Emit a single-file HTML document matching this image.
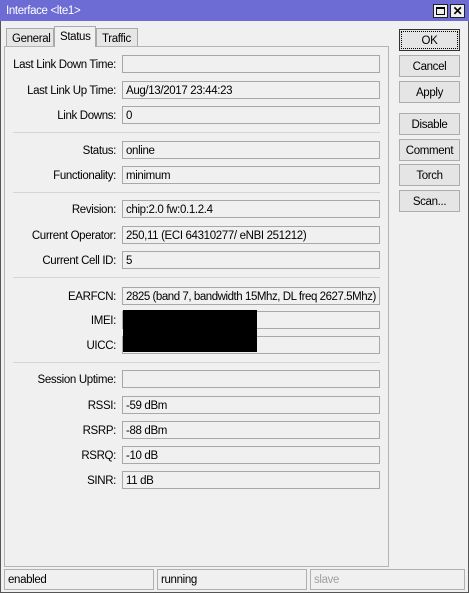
<!DOCTYPE html>
<html><head><style>
*{box-sizing:border-box;margin:0;padding:0}
body{width:469px;height:594px;background:#fff;font-family:"Liberation Sans",sans-serif;font-size:11.5px;letter-spacing:-0.35px;color:#000;position:relative;overflow:hidden}
.win{position:absolute;left:0;top:0;width:469px;height:593px;background:#f0f0f0;border:1px solid #555;border-top:none}
.title{position:absolute;left:0;top:0;width:469px;height:21px;background:#6c6cd4;color:#fff;padding:5px 0 0 6px}
.tb{position:absolute;top:4px;width:15px;height:14px;background:#f0f0f0;border:1px solid #222}
.tab{position:absolute;top:28px;height:19px;border:1px solid #aaa;border-bottom:none;background:#e6e6e6;padding:4px 0 0 5px}
.panel{position:absolute;left:4px;top:46px;width:385px;height:521px;border:1px solid #b4b4b4;background:#f0f0f0}
.lbl{position:absolute;text-align:right;white-space:nowrap;margin-top:1px}
.f{position:absolute;left:122px;width:258px;height:18px;border:1px solid #a8a8a8;background:#f0f0f0;padding:3px 0 0 3px;white-space:nowrap;overflow:hidden}
.sep{position:absolute;left:13px;width:367px;height:1px;background:#d4d4d4}
.btn{position:absolute;left:399px;width:61px;height:22px;border:1px solid #adadad;background:#e5e5e5;text-align:center;padding-top:5px}
.sb{position:absolute;top:569px;height:21px;border:1px solid #b0b0b0;padding:4px 0 0 3px}
.blk{position:absolute;left:123px;width:134px;background:#000}
</style></head><body>
<div class="win"></div>
<div class="title">Interface &lt;lte1&gt;</div>
<div class="tb" style="left:433px"><div style="position:absolute;left:2px;top:2px;width:9px;height:8px;border:1px solid #000;border-top-width:2px"></div></div>
<div class="tb" style="left:450px;font-weight:bold;font-size:12px;line-height:12px;text-align:center">✕</div>
<div class="tab" style="left:6px;width:48px">General</div>
<div class="tab" style="left:54px;width:42px;top:26px;height:21px;background:#f0f0f0;z-index:2">Status</div>
<div class="tab" style="left:96px;width:42px">Traffic</div>
<div class="panel"></div>

<div class="lbl" style="top:58px;left:0;width:116px">Last Link Down Time:</div><div class="f" style="top:55px"></div>
<div class="lbl" style="top:84px;left:0;width:116px">Last Link Up Time:</div><div class="f" style="top:81px">Aug/13/2017 23:44:23</div>
<div class="lbl" style="top:109px;left:0;width:116px">Link Downs:</div><div class="f" style="top:106px">0</div>
<div class="sep" style="top:132px"></div>
<div class="lbl" style="top:144px;left:0;width:116px">Status:</div><div class="f" style="top:141px">online</div>
<div class="lbl" style="top:169px;left:0;width:116px">Functionality:</div><div class="f" style="top:166px">minimum</div>
<div class="sep" style="top:192px"></div>
<div class="lbl" style="top:203px;left:0;width:116px">Revision:</div><div class="f" style="top:200px">chip:2.0 fw:0.1.2.4</div>
<div class="lbl" style="top:229px;left:0;width:116px">Current Operator:</div><div class="f" style="top:226px">250,11 (ECI 64310277/ eNBI 251212)</div>
<div class="lbl" style="top:254px;left:0;width:116px">Current Cell ID:</div><div class="f" style="top:251px">5</div>
<div class="sep" style="top:277px"></div>
<div class="lbl" style="top:290px;left:0;width:116px">EARFCN:</div><div class="f" style="top:287px;letter-spacing:-0.45px">2825 (band 7, bandwidth 15Mhz, DL freq 2627.5Mhz)</div>
<div class="lbl" style="top:314px;left:0;width:116px">IMEI:</div><div class="f" style="top:311px"></div>
<div class="lbl" style="top:339px;left:0;width:116px">UICC:</div><div class="f" style="top:336px"></div>
<div class="blk" style="top:310px;height:42px"></div>
<div class="sep" style="top:362px"></div>
<div class="lbl" style="top:373px;left:0;width:116px">Session Uptime:</div><div class="f" style="top:370px"></div>
<div class="lbl" style="top:399px;left:0;width:116px">RSSI:</div><div class="f" style="top:396px">-59 dBm</div>
<div class="lbl" style="top:424px;left:0;width:116px">RSRP:</div><div class="f" style="top:421px">-88 dBm</div>
<div class="lbl" style="top:449px;left:0;width:116px">RSRQ:</div><div class="f" style="top:446px">-10 dB</div>
<div class="lbl" style="top:474px;left:0;width:116px">SINR:</div><div class="f" style="top:471px">11 dB</div>

<div class="btn" style="top:29px;border:1px solid #333;outline:1px dotted #000;outline-offset:-3px">OK</div>
<div class="btn" style="top:55px">Cancel</div>
<div class="btn" style="top:81px">Apply</div>
<div class="btn" style="top:113px">Disable</div>
<div class="btn" style="top:139px">Comment</div>
<div class="btn" style="top:164px">Torch</div>
<div class="btn" style="top:190px">Scan...</div>

<div class="sb" style="left:4px;width:150px">enabled</div>
<div class="sb" style="left:157px;width:150px">running</div>
<div class="sb" style="left:310px;width:155px;color:#a0a0a0">slave</div>
</body></html>
